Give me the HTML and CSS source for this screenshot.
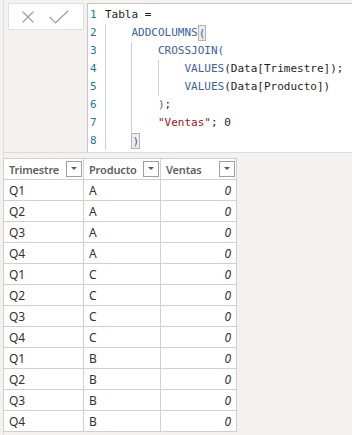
FILE: index.html
```html
<!DOCTYPE html>
<html lang="es">
<head>
<meta charset="utf-8">
<title>Tabla</title>
<link rel="stylesheet" href="styles.css">
</head>
<body>
<div class="app">
  <div class="formula-bar">
    <div class="fx-buttons">
      <svg class="icon-x" width="12" height="12" viewBox="0 0 12 12"><path d="M0.5 0.5 L11.5 11.5 M11.5 0.5 L0.5 11.5" stroke="#a19f9d" stroke-width="1.2" fill="none"/></svg>
      <svg class="icon-check" width="20" height="14" viewBox="0 0 20 14"><path d="M0.8 7 L6.5 12.8 L19.2 0.8" stroke="#a19f9d" stroke-width="1.2" fill="none"/></svg>
    </div>
    <div class="editor">
      <div class="line"><span class="num">1</span><span class="code">Tabla =</span></div>
      <div class="line"><span class="num">2</span><span class="code"><span class="ind"></span><span class="fn">ADDCOLUMNS</span><span class="match">(</span></span></div>
      <div class="line"><span class="num">3</span><span class="code"><span class="ind"></span><span class="ind"></span><span class="fn">CROSSJOIN</span><span class="fn">(</span></span></div>
      <div class="line"><span class="num">4</span><span class="code"><span class="ind"></span><span class="ind"></span><span class="ind"></span><span class="fn">VALUES</span>(Data[Trimestre]);</span></div>
      <div class="line"><span class="num">5</span><span class="code"><span class="ind"></span><span class="ind"></span><span class="ind"></span><span class="fn">VALUES</span>(Data[Producto])</span></div>
      <div class="line"><span class="num">6</span><span class="code"><span class="ind"></span><span class="ind"></span><span class="fn">)</span>;</span></div>
      <div class="line"><span class="num">7</span><span class="code"><span class="ind"></span><span class="ind"></span><span class="str">"Ventas"</span>; 0</span></div>
      <div class="line"><span class="num">8</span><span class="code"><span class="ind"></span><span class="match">)</span></span></div>
    </div>
  </div>

  <div class="grid">
    <div class="th"><span>Trimestre</span><span class="dd"></span></div>
    <div class="th"><span>Producto</span><span class="dd"></span></div>
    <div class="th"><span>Ventas</span><span class="dd"></span></div>

    <div class="td">Q1</div><div class="td">A</div><div class="td num-cell">0</div>
    <div class="td">Q2</div><div class="td">A</div><div class="td num-cell">0</div>
    <div class="td">Q3</div><div class="td">A</div><div class="td num-cell">0</div>
    <div class="td">Q4</div><div class="td">A</div><div class="td num-cell">0</div>
    <div class="td">Q1</div><div class="td">C</div><div class="td num-cell">0</div>
    <div class="td">Q2</div><div class="td">C</div><div class="td num-cell">0</div>
    <div class="td">Q3</div><div class="td">C</div><div class="td num-cell">0</div>
    <div class="td">Q4</div><div class="td">C</div><div class="td num-cell">0</div>
    <div class="td">Q1</div><div class="td">B</div><div class="td num-cell">0</div>
    <div class="td">Q2</div><div class="td">B</div><div class="td num-cell">0</div>
    <div class="td">Q3</div><div class="td">B</div><div class="td num-cell">0</div>
    <div class="td">Q4</div><div class="td">B</div><div class="td num-cell">0</div>
  </div>
</div>
</body>
</html>
```
FILE: styles.css
```css
html, body {
  margin: 0;
  padding: 0;
}
body {
  background: #f3f2f1;
  width: 352px;
  height: 435px;
  overflow: hidden;
  font-family: "Noto Sans", "Open Sans", sans-serif;
}
.app {
  margin-left: 3px;
  border-left: 1px solid #e1dfdd;
  height: 435px;
}
.formula-bar {
  display: flex;
  align-items: flex-start;
  box-sizing: border-box;
  padding-top: 3px;
  border-bottom: 1px solid #dddbd9;
  height: 153px;
}
.fx-buttons {
  margin-left: 4px;
  width: 76px;
  height: 27px;
  box-sizing: border-box;
  background: #ffffff;
  border: 1px solid #e1dfdd;
  display: flex;
  align-items: center;
}
.icon-x {
  margin-left: 13px;
}
.icon-check {
  margin-left: 15px;
}
.editor {
  margin-left: 3px;
  flex: 1;
  height: 149px;
  box-sizing: border-box;
  background: #ffffff;
  border-left: 1px solid #c8c6c4;
  border-top: 1px solid #c8c6c4;
  padding-top: 2px;
  font-family: "DejaVu Sans Mono", "Liberation Mono", monospace;
  font-size: 11px;
  color: #1e1e1e;
}
.line {
  display: flex;
  height: 18px;
  line-height: 18px;
}
.num {
  width: 15px;
  padding-left: 2px;
  color: #237893;
  flex: none;
}
.code {
  white-space: pre;
}
.ind {
  display: inline-block;
  width: 4ch;
  height: 18px;
  vertical-align: top;
  box-sizing: border-box;
  border-left: 1px solid #d0d0d0;
}
.fn {
  color: #3a62a0;
}
.str {
  color: #a31515;
}
.match {
  display: inline-block;
  height: 16px;
  line-height: 16px;
  margin-top: 1px;
  vertical-align: top;
  box-sizing: border-box;
  border: 1px solid #b4b4b4;
  background: #ececec;
  color: #3a62a0;
}
.grid {
  display: grid;
  grid-template-columns: 80px 77px 76px;
  grid-auto-rows: 21px;
  width: max-content;
  margin-top: 5px;
  margin-left: -1px;
  border-left: 1px solid #d2d0ce;
  border-top: 1px solid #d2d0ce;
  background: #ffffff;
}
.th, .td {
  box-sizing: border-box;
  border-right: 1px solid #d2d0ce;
  border-bottom: 1px solid #d2d0ce;
  font-size: 12px;
  display: flex;
  align-items: center;
}
.th {
  justify-content: space-between;
  padding-left: 5px;
  padding-right: 1px;
  font-size: 11px;
  font-weight: 600;
  letter-spacing: -0.15px;
  color: #605e5c;
}
.dd {
  width: 16px;
  height: 16px;
  box-sizing: border-box;
  border: 1px solid #a19f9d;
  background: #ffffff;
  position: relative;
}
.dd::after {
  content: "";
  position: absolute;
  left: 4px;
  top: 5px;
  border-left: 3px solid transparent;
  border-right: 3px solid transparent;
  border-top: 3px solid #605e5c;
}
.td {
  padding-left: 5px;
  color: #323130;
}
.num-cell {
  justify-content: flex-end;
  padding-right: 5px;
  font-style: italic;
}
```
